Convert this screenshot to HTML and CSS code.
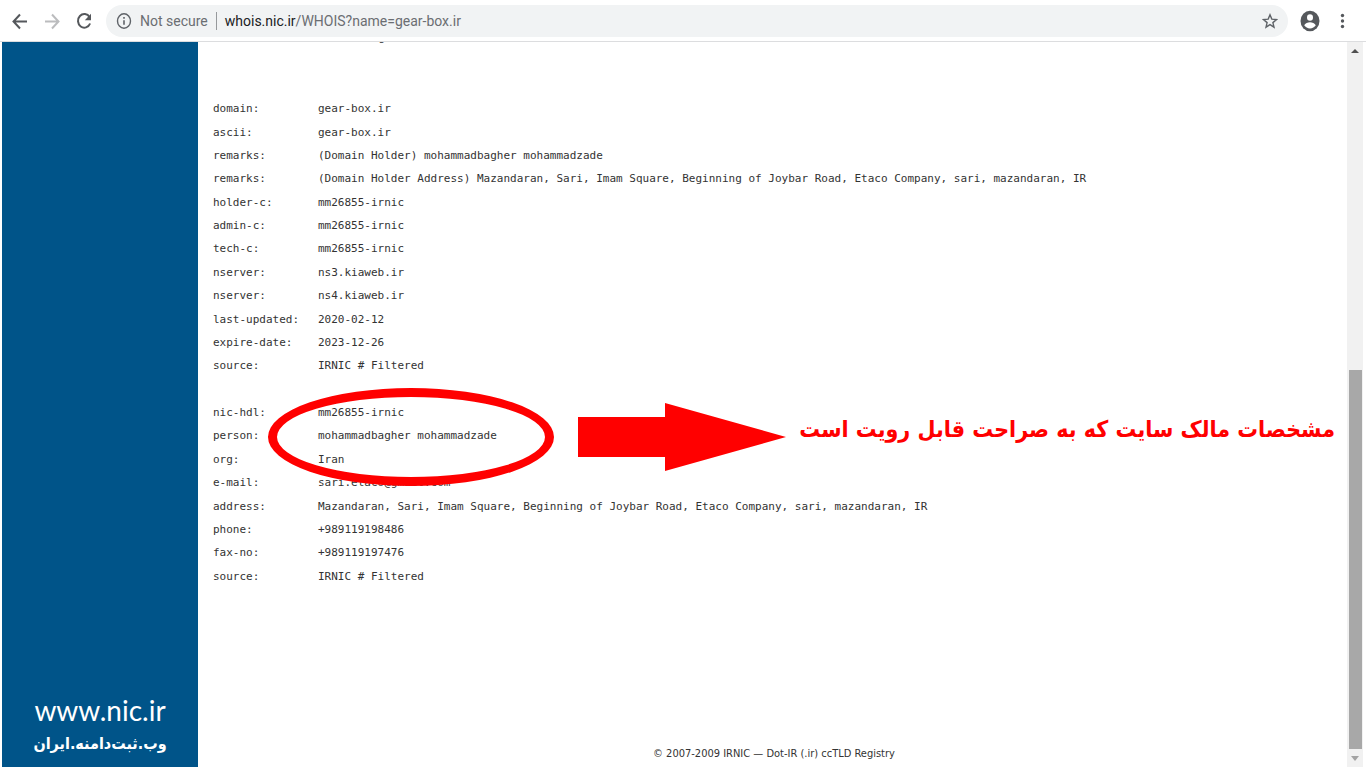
FILE: index.html
```html
<!DOCTYPE html>
<html lang="en">
<head>
    <meta charset="UTF-8">
    <meta name="viewport" content="width=device-width, initial-scale=1.0">
    <title>whois.nic.ir</title>
    <link rel="stylesheet" href="styles.css">
</head>
<body>

    <header class="toolbar">
        <button class="icon-btn" aria-label="Back">
            <svg width="20" height="20" viewBox="0 0 20 20"><path d="M17 10.500H4M10 3.500L3.500 10.500l6.500 7" fill="none" stroke="#55585c" stroke-width="2"/></svg>
        </button>
        <button class="icon-btn" aria-label="Forward">
            <svg width="20" height="20" viewBox="0 0 20 20"><path d="M3 10.500h13M10 3.500l6.500 7-6.500 7" fill="none" stroke="#bbbcbe" stroke-width="2"/></svg>
        </button>
        <button class="icon-btn" aria-label="Reload">
            <svg width="20" height="20" viewBox="0 0 20 20"><path d="M15.600 6.200A6.300 6.800 0 1 0 16.100 12.500" fill="none" stroke="#55585c" stroke-width="2"/><path d="M17 2.800V9.200h-6.200z" fill="#55585c"/></svg>
        </button>
        <div class="address-bar">
            <svg width="16" height="16" viewBox="0 0 16 16"><ellipse cx="8" cy="8" rx="6.500" ry="7.200" fill="none" stroke="#5f6368" stroke-width="1.400"/><path d="M8 7.200v4.600M8 4v1.700" stroke="#5f6368" stroke-width="1.600"/></svg>
            <span class="not-secure">Not secure</span>
            <label class="url">
                <span class="url-text" aria-hidden="true"><b>whois.nic.ir</b>/WHOIS?name=gear-box.ir</span>
                <input class="url-input" type="text" aria-label="Address">
            </label>
            <button class="star-btn" aria-label="Bookmark">
                <svg width="16" height="16" viewBox="0 0 16 16"><path d="M8 1.800l1.800 4.300 4.700.4-3.600 3.100 1.100 4.600L8 11.700l-4 2.500 1.100-4.600-3.600-3.100 4.700-.4z" fill="none" stroke="#5f6368" stroke-width="1.400"/></svg>
            </button>
        </div>
        <button class="icon-btn" aria-label="Profile">
            <svg width="20" height="22" viewBox="0 0 20 22"><ellipse cx="10" cy="11" rx="9.500" ry="10.300" fill="#55585c"/><ellipse cx="10" cy="7.500" rx="3" ry="3.200" fill="#fff"/><path d="M4.200 15.200c1-2 3.600-3 5.800-3s4.800 1 5.800 3c-1.300 2-3.400 3.200-5.800 3.200s-4.500-1.200-5.800-3.200z" fill="#fff"/></svg>
        </button>
        <button class="icon-btn" aria-label="Menu">
            <svg width="20" height="20" viewBox="0 0 20 20"><circle cx="10.500" cy="4.500" r="1.700" fill="#55585c"/><circle cx="10.500" cy="10" r="1.700" fill="#55585c"/><circle cx="10.500" cy="15.500" r="1.700" fill="#55585c"/></svg>
        </button>
    </header>

    <div class="page">
        <aside class="sidebar">
            <div class="site-name">www.nic.ir</div>
            <div class="site-name-fa" lang="fa" dir="rtl">وب.ثبت‌دامنه.ایران</div>
        </aside>

        <main class="content">
            <div class="info">% Information related to gear-box.ir</div>

            <table class="whois">
                <tr><th scope="row">domain:</th><td>gear-box.ir</td></tr>
                <tr><th scope="row">ascii:</th><td>gear-box.ir</td></tr>
                <tr><th scope="row">remarks:</th><td>(Domain Holder) mohammadbagher mohammadzade</td></tr>
                <tr><th scope="row">remarks:</th><td>(Domain Holder Address) Mazandaran, Sari, Imam Square, Beginning of Joybar Road, Etaco Company, sari, mazandaran, IR</td></tr>
                <tr><th scope="row">holder-c:</th><td>mm26855-irnic</td></tr>
                <tr><th scope="row">admin-c:</th><td>mm26855-irnic</td></tr>
                <tr><th scope="row">tech-c:</th><td>mm26855-irnic</td></tr>
                <tr><th scope="row">nserver:</th><td>ns3.kiaweb.ir</td></tr>
                <tr><th scope="row">nserver:</th><td>ns4.kiaweb.ir</td></tr>
                <tr><th scope="row">last-updated:</th><td>2020-02-12</td></tr>
                <tr><th scope="row">expire-date:</th><td>2023-12-26</td></tr>
                <tr><th scope="row">source:</th><td>IRNIC # Filtered</td></tr>
                <tr><td colspan="2">&nbsp;</td></tr>
                <tr><th scope="row">nic-hdl:</th><td>mm26855-irnic</td></tr>
                <tr><th scope="row">person:</th><td>mohammadbagher mohammadzade</td></tr>
                <tr><th scope="row">org:</th><td>Iran</td></tr>
                <tr><th scope="row">e-mail:</th><td>sari.etaco@gmail.com</td></tr>
                <tr><th scope="row">address:</th><td>Mazandaran, Sari, Imam Square, Beginning of Joybar Road, Etaco Company, sari, mazandaran, IR</td></tr>
                <tr><th scope="row">phone:</th><td>+989119198486</td></tr>
                <tr><th scope="row">fax-no:</th><td>+989119197476</td></tr>
                <tr><th scope="row">source:</th><td>IRNIC # Filtered</td></tr>
            </table>

            <!-- owner marker over the record -->
            <div class="callout">
                <div class="ring"></div>
                <svg class="arrow" width="208" height="68" viewBox="0 0 208 68"><path d="M0 14h87V0l121 34L87 68V54H0z" fill="#f00"/></svg>
                <div class="note" lang="fa" dir="rtl">مشخصات مالک سایت که به صراحت قابل رویت است</div>
            </div>

            <footer class="footer">© 2007-2009 IRNIC — Dot-IR (.ir) ccTLD Registry</footer>
        </main>

        <div class="scrollbar">
            <button class="scroll-btn" aria-label="Scroll up"><svg width="8" height="4" viewBox="0 0 8 4"><path d="M4 0l4 4H0z" fill="#505050"/></svg></button>
            <div class="track"><div class="thumb"></div></div>
            <button class="scroll-btn" aria-label="Scroll down"><svg width="8" height="5" viewBox="0 0 8 5"><path d="M0 0h8L4 5z" fill="#a3a3a3"/></svg></button>
        </div>
    </div>

</body>
</html>
```
FILE: styles.css
```css
* { box-sizing: border-box; }
body {
    margin: 0;
    height: 100vh;
    display: flex;
    flex-direction: column;
    overflow: hidden;
    background: #fff;
    color: #333;
    font-family: Roboto, sans-serif;
}
button {
    padding: 0;
    border: none;
    background: none;
    display: flex;
    align-items: center;
    justify-content: center;
    cursor: pointer;
}

/* browser toolbar */
.toolbar {
    display: flex;
    align-items: center;
    gap: 12px;
    height: 42px;
    flex: none;
    padding: 0 14px 0 10px;
    border-bottom: 1px solid #dcdddf;
}
.icon-btn { width: 20px; height: 32px; }
.address-bar {
    flex: 1;
    display: flex;
    align-items: center;
    height: 32px;
    padding: 0 10px;
    border-radius: 16px;
    background: #f1f3f4;
    color: #6b6e72;
    font-size: 14px;
}
.not-secure {
    margin-left: 8px;
    padding-right: 8px;
    line-height: 18px;
    border-right: 1px solid #96999c;
}
.url {
    position: relative;
    flex: 1;
    margin-left: 8px;
}
.url-text b { font-weight: normal; color: #202124; }
.url-input {
    position: absolute;
    inset: 0;
    width: 100%;
    border: none;
    outline: none;
    background: transparent;
}

/* page */
.page { flex: 1; display: flex; min-height: 0; padding: 0 3px 1px 2px; }
.sidebar {
    width: 196px;
    flex: none;
    display: flex;
    flex-direction: column;
    justify-content: flex-end;
    align-items: center;
    padding-bottom: 10px;
    background: #005489;
    color: #fff;
}
.site-name { font: 28px/42px Lato, sans-serif; }
.site-name-fa {
    font: bold 16px/26px "DejaVu Sans Condensed", "DejaVu Sans", sans-serif;
    white-space: nowrap;
}
.content {
    position: relative;
    flex: 1;
    min-width: 0;
    display: flex;
    flex-direction: column;
    overflow: hidden;
    padding-left: 15px;
}
.info, .whois { font-family: "DejaVu Sans Mono", monospace; font-size: 11px; }
.info { line-height: 24px; margin-top: -16px; white-space: pre; }
.whois {
    width: 100%;
    height: 491px;
    margin-top: 47px;
    border-collapse: collapse;
    line-height: 23px;
}
.whois th, .whois td {
    padding: 0;
    text-align: left;
    font-weight: normal;
    white-space: nowrap;
}
.whois th { width: 105px; }
.footer {
    margin-top: auto;
    padding: 0 12px 4px 0;
    text-align: center;
    font: 11px/18px "DejaVu Sans Condensed", "DejaVu Sans", sans-serif;
}

/* callout */
.callout {
    position: absolute;
    top: 346px;
    left: 70px;
    right: 12px;
    display: flex;
    align-items: center;
    color: #f00;
}
.ring {
    width: 286px;
    height: 98px;
    flex: none;
    border: 9px solid #f00;
    border-radius: 50%;
}
.arrow { flex: none; margin-left: 24px; }
.note {
    margin-left: auto;
    padding-bottom: 16px;
    font: bold 23px/40px "DejaVu Sans Condensed", "DejaVu Sans", sans-serif;
    white-space: nowrap;
}

/* scrollbar */
.scrollbar {
    width: 16px;
    flex: none;
    display: flex;
    flex-direction: column;
    background: #f1f1f1;
}
.scroll-btn { height: 18px; width: 100%; }
.track {
    flex: 1;
    display: flex;
    flex-direction: column;
    justify-content: flex-end;
    padding: 0 1px 0 2px;
}
.thumb { height: 55%; background: #a8a8a8; }
```
